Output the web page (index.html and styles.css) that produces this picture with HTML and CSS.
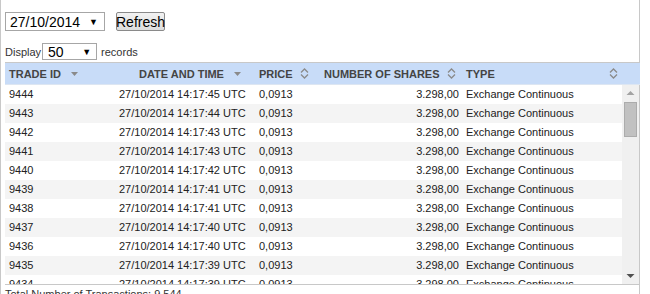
FILE: index.html
```html
<!DOCTYPE html>
<html>
<head>
<meta charset="utf-8">
<link rel="stylesheet" href="styles.css">
</head>
<body>
<div class="wrap">
  <div class="toolbar">
    <div class="sel sel-date"><span>27/10/2014</span><span class="caret">▼</span></div>
    <div class="btn">Refresh</div>
  </div>
  <div class="length">
    <span>Display</span>
    <div class="sel sel-len"><span>50</span><span class="caret">▼</span></div>
    <span>records</span>
  </div>
  <div class="table">
    <div class="thead">
      <div class="th c1">TRADE ID <svg class="ico tri" width="7" height="4" viewBox="0 0 7 4"><path d="M0 0H7L3.5 4Z" fill="#8a8a8a"/></svg></div>
      <div class="th c2 hd2">DATE AND TIME <svg class="ico tri" width="7" height="4" viewBox="0 0 7 4"><path d="M0 0H7L3.5 4Z" fill="#8a8a8a"/></svg></div>
      <div class="th c3">PRICE <svg class="ico chev" width="9" height="11" viewBox="0 0 9 11"><path d="M1 4.5L4.5 1L8 4.5M1 6.5L4.5 10L8 6.5" fill="none" stroke="#8a8a8a" stroke-width="1.3"/></svg></div>
      <div class="th c4">NUMBER OF SHARES <svg class="ico chev" width="9" height="11" viewBox="0 0 9 11"><path d="M1 4.5L4.5 1L8 4.5M1 6.5L4.5 10L8 6.5" fill="none" stroke="#8a8a8a" stroke-width="1.3"/></svg></div>
      <div class="th c5">TYPE <svg class="ico chev end" width="9" height="11" viewBox="0 0 9 11"><path d="M1 4.5L4.5 1L8 4.5M1 6.5L4.5 10L8 6.5" fill="none" stroke="#8a8a8a" stroke-width="1.3"/></svg></div>
    </div>
    <div class="tbody">
      <div class="rows">
        <div class="tr"><div class="c1">9444</div><div class="c2">27/10/2014 14:17:45 UTC</div><div class="c3">0,0913</div><div class="c4">3.298,00</div><div class="c5">Exchange Continuous</div></div>
        <div class="tr"><div class="c1">9443</div><div class="c2">27/10/2014 14:17:44 UTC</div><div class="c3">0,0913</div><div class="c4">3.298,00</div><div class="c5">Exchange Continuous</div></div>
        <div class="tr"><div class="c1">9442</div><div class="c2">27/10/2014 14:17:43 UTC</div><div class="c3">0,0913</div><div class="c4">3.298,00</div><div class="c5">Exchange Continuous</div></div>
        <div class="tr"><div class="c1">9441</div><div class="c2">27/10/2014 14:17:43 UTC</div><div class="c3">0,0913</div><div class="c4">3.298,00</div><div class="c5">Exchange Continuous</div></div>
        <div class="tr"><div class="c1">9440</div><div class="c2">27/10/2014 14:17:42 UTC</div><div class="c3">0,0913</div><div class="c4">3.298,00</div><div class="c5">Exchange Continuous</div></div>
        <div class="tr"><div class="c1">9439</div><div class="c2">27/10/2014 14:17:41 UTC</div><div class="c3">0,0913</div><div class="c4">3.298,00</div><div class="c5">Exchange Continuous</div></div>
        <div class="tr"><div class="c1">9438</div><div class="c2">27/10/2014 14:17:41 UTC</div><div class="c3">0,0913</div><div class="c4">3.298,00</div><div class="c5">Exchange Continuous</div></div>
        <div class="tr"><div class="c1">9437</div><div class="c2">27/10/2014 14:17:40 UTC</div><div class="c3">0,0913</div><div class="c4">3.298,00</div><div class="c5">Exchange Continuous</div></div>
        <div class="tr"><div class="c1">9436</div><div class="c2">27/10/2014 14:17:40 UTC</div><div class="c3">0,0913</div><div class="c4">3.298,00</div><div class="c5">Exchange Continuous</div></div>
        <div class="tr"><div class="c1">9435</div><div class="c2">27/10/2014 14:17:39 UTC</div><div class="c3">0,0913</div><div class="c4">3.298,00</div><div class="c5">Exchange Continuous</div></div>
        <div class="tr"><div class="c1">9434</div><div class="c2">27/10/2014 14:17:39 UTC</div><div class="c3">0,0913</div><div class="c4">3.298,00</div><div class="c5">Exchange Continuous</div></div>
      </div>
      <div class="scrollbar">
        <svg class="sb-arrow" width="17" height="17" viewBox="0 0 17 17"><path d="M4.5 10H12.5L8.5 6Z" fill="#a3a3a3"/></svg>
        <div class="track"><div class="thumb"></div></div>
        <svg class="sb-arrow" width="17" height="17" viewBox="0 0 17 17"><path d="M4.5 7H12.5L8.5 11Z" fill="#505050"/></svg>
      </div>
    </div>
    <div class="footer">Total Number of Transactions: 9.544</div>
  </div>
</div>
</body>
</html>
```

FILE: styles.css
```css
html, body {
  margin: 0;
  padding: 0;
  background: #fff;
  overflow: hidden;
}
body {
  font-family: "Liberation Sans", Arial, sans-serif;
  color: #222;
}
.wrap {
  height: 310px;
  border-left: 1px solid #c8c8c8;
  border-right: 1px solid #c8c8c8;
  padding-left: 4px;
  box-sizing: content-box;
  width: 634px;
}
.toolbar {
  display: flex;
  align-items: center;
  gap: 11px;
  padding-top: 12px;
  height: 19px;
}
.sel {
  display: flex;
  align-items: center;
  justify-content: space-between;
  box-sizing: border-box;
  border: 1px solid #a6a6a6;
  background: #fff;
  color: #000;
  font-size: 14px;
}
.sel-date {
  width: 100px;
  height: 19px;
  padding: 0 6px 0 4px;
}
.caret {
  font-size: 9px;
  color: #000;
}
.btn {
  box-sizing: border-box;
  width: 49px;
  height: 19px;
  border: 1px solid #8a8a8a;
  border-radius: 2px;
  background: linear-gradient(#f2f2f2, #dddddd);
  font-size: 14px;
  color: #000;
  display: flex;
  align-items: center;
  justify-content: center;
}
.length {
  display: flex;
  align-items: center;
  margin-top: 12px;
  height: 17px;
  font-size: 11px;
  color: #333;
}
.sel-len {
  width: 55px;
  height: 17px;
  margin: 0 4px 0 1px;
  padding: 0 5px;
}
.table {
  margin-top: 2px;
  width: 635px;
}
.thead {
  display: flex;
  align-items: center;
  height: 21px;
  border-top: 1px solid #c8c8c8;
  border-bottom: 1px solid #dde6f2;
  background: #c8dcf8;
  font-size: 11px;
  font-weight: bold;
  color: #444;
}
.th {
  display: flex;
  align-items: center;
  box-sizing: border-box;
  white-space: nowrap;
}
.ico {
  margin-left: 10px;
  flex: none;
}
.chev {
  margin-left: 7px;
}
.chev.end {
  margin-left: auto;
  margin-right: 21px;
}
.c1 { width: 110px; padding-left: 4px; box-sizing: border-box; }
.c2 { width: 140px; padding-left: 4px; box-sizing: border-box; }
.hd2 { padding-left: 24px; }
.c3 { width: 65px; padding-left: 4px; box-sizing: border-box; }
.c4 { width: 142px; padding-left: 4px; padding-right: 3px; box-sizing: border-box; }
.c5 { flex: 1; padding-left: 4px; box-sizing: border-box; }
.tr .c4 { text-align: right; }
.thead .c5 { width: 177px; flex: none; }
.tbody {
  display: flex;
  height: 199px;
  overflow: hidden;
  border-bottom: 1px solid #c8c8c8;
}
.rows {
  width: 617px;
  flex: none;
}
.tr {
  display: flex;
  box-sizing: border-box;
  height: 19px;
  padding-bottom: 2px;
  align-items: center;
  font-size: 11px;
  color: #222;
  white-space: nowrap;
}
.tr:nth-child(even) {
  background: #f4f4f4;
}
.scrollbar {
  width: 17px;
  flex: none;
  background: #f0f0f0;
  display: flex;
  flex-direction: column;
}
.sb-arrow {
  display: block;
  flex: none;
}
.track {
  flex: 1;
  padding: 0 2px;
}
.thumb {
  box-sizing: border-box;
  height: 35px;
  background: #c1c1c1;
  border: 1px solid #acacac;
}
.footer {
  font-size: 11px;
  color: #333;
  padding-top: 3px;
  height: 14px;
}
```
